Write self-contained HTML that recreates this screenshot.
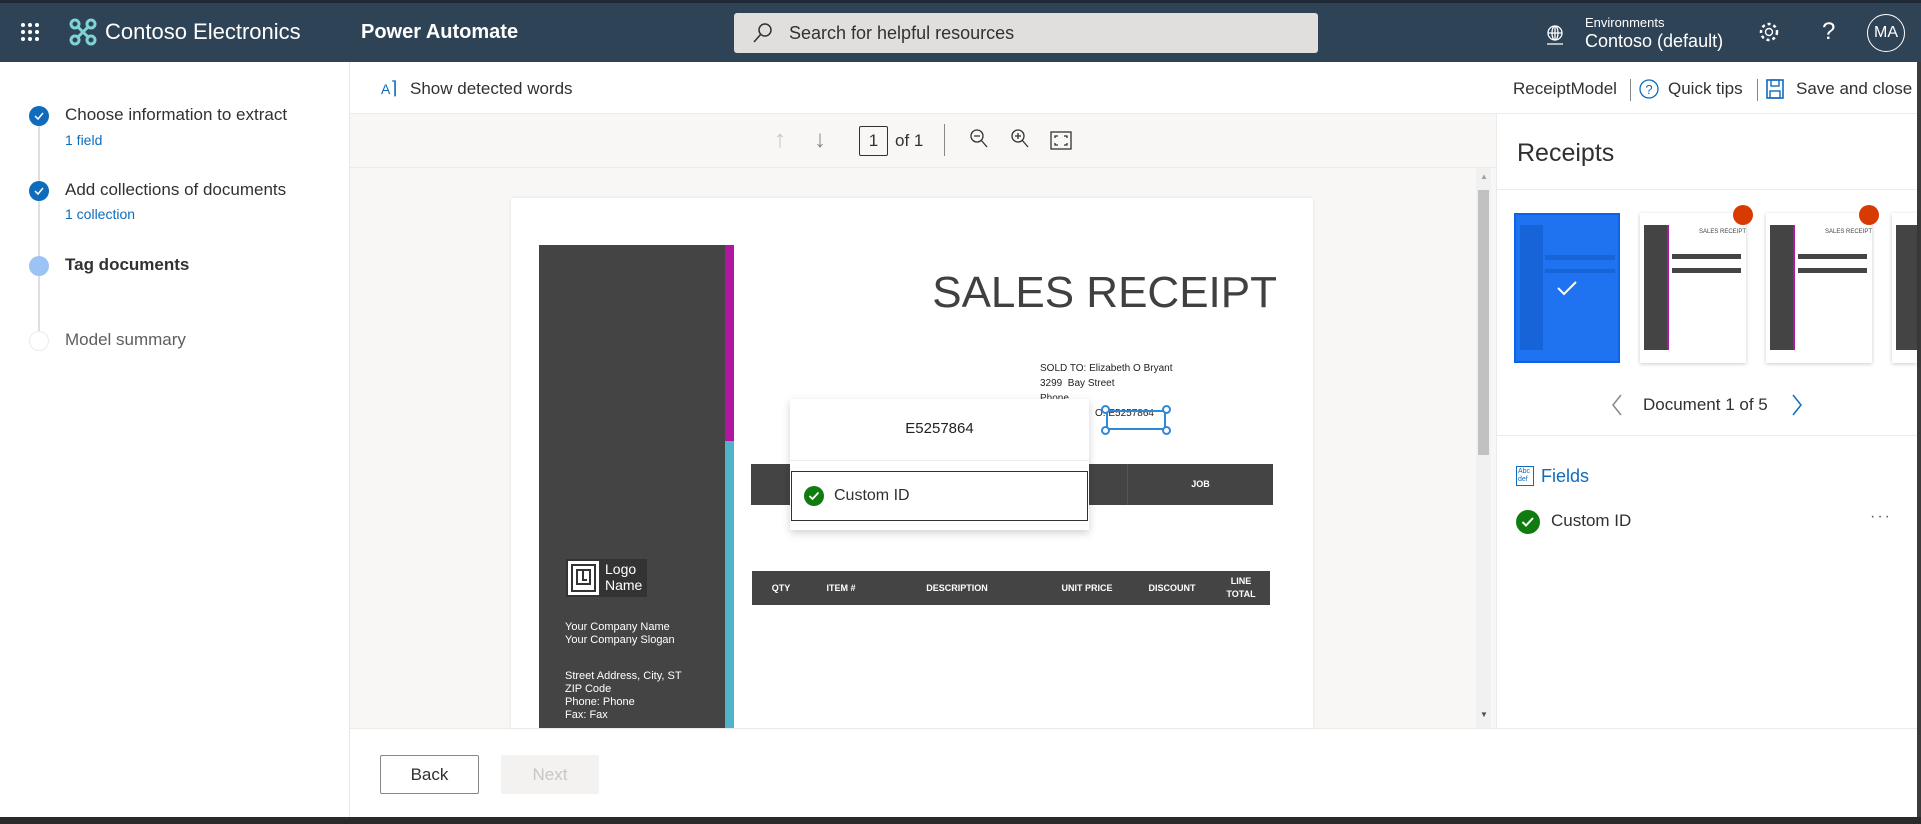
<!DOCTYPE html>
<html><head><meta charset="utf-8"><style>
*{box-sizing:border-box;margin:0;padding:0}
body{width:1921px;height:824px;position:relative;overflow:hidden;background:#fff;font-family:"Liberation Sans",sans-serif;color:#323130}
.a{position:absolute}
.hdr{left:0;top:0;width:1921px;height:62px;background:#2f4357;border-top:3px solid #1f2a36}
.w{color:#fff}
.dk{background:#444}
.th{font-size:9px;color:#fff;font-weight:bold;text-align:center}
</style></head><body>
<div class="a hdr"></div>
<svg class="a" style="left:20px;top:22px" width="20" height="20"><g fill="#fff"><circle cx="3" cy="3" r="2"/><circle cx="10" cy="3" r="2"/><circle cx="17" cy="3" r="2"/><circle cx="3" cy="10" r="2"/><circle cx="10" cy="10" r="2"/><circle cx="17" cy="10" r="2"/><circle cx="3" cy="17" r="2"/><circle cx="10" cy="17" r="2"/><circle cx="17" cy="17" r="2"/></g></svg>
<svg class="a" style="left:69px;top:18px" width="28" height="28" viewBox="0 0 28 28"><g fill="none" stroke="#7fd3d1" stroke-width="3"><circle cx="6" cy="6" r="4"/><circle cx="22" cy="6" r="4"/><circle cx="6" cy="22" r="4"/><circle cx="22" cy="22" r="4"/><path d="M9 9l10 10M19 9L9 19"/></g></svg>
<div class="a w" style="left:105px;top:19px;font-size:22px">Contoso Electronics</div>
<div class="a w" style="left:361px;top:21px;font-size:20px;font-weight:bold">Power Automate</div>
<div class="a" style="left:734px;top:13px;width:584px;height:40px;background:#e1dfdd;border-radius:3px"></div>
<svg class="a" style="left:752px;top:22px" width="22" height="22"><circle cx="13" cy="8" r="6" fill="none" stroke="#323130" stroke-width="1.5"/><path d="M9 12L2 20" stroke="#323130" stroke-width="1.5"/></svg>
<div class="a" style="left:789px;top:23px;font-size:18px;color:#323130">Search for helpful resources</div>
<svg class="a" style="left:1544px;top:24px" width="22" height="22"><g fill="none" stroke="#fff" stroke-width="1.3"><circle cx="11" cy="9" r="7"/><ellipse cx="11" cy="9" rx="3" ry="7"/><path d="M4 9h14M11 2v14M3 20h16"/></g></svg>
<div class="a w" style="left:1585px;top:15px;font-size:13px">Environments</div>
<div class="a w" style="left:1585px;top:31px;font-size:18px">Contoso (default)</div>
<svg class="a" style="left:1758px;top:21px" width="22" height="22"><circle cx="11" cy="11" r="3.5" fill="none" stroke="#fff" stroke-width="1.4"/><circle cx="11" cy="11" r="8" fill="none" stroke="#fff" stroke-width="2.5" stroke-dasharray="3 3"/></svg>
<div class="a w" style="left:1822px;top:18px;font-size:24px">?</div>
<div class="a w" style="left:1867px;top:14px;width:38px;height:38px;border:1.5px solid #fff;border-radius:50%;font-size:16px;text-align:center;line-height:35px">MA</div>

<!-- left panel -->
<div class="a" style="left:349px;top:62px;width:1px;height:755px;background:#e8e6e4"></div>
<div class="a" style="left:38px;top:126px;width:2px;height:215px;background:#e1dfdd"></div>
<svg class="a" style="left:29px;top:106px" width="20" height="20"><circle cx="10" cy="10" r="10" fill="#0f6cbd"/><path d="M6 10l3 3 5-6" fill="none" stroke="#fff" stroke-width="1.5"/></svg>
<svg class="a" style="left:29px;top:181px" width="20" height="20"><circle cx="10" cy="10" r="10" fill="#0f6cbd"/><path d="M6 10l3 3 5-6" fill="none" stroke="#fff" stroke-width="1.5"/></svg>
<div class="a" style="left:29px;top:256px;width:20px;height:20px;border-radius:50%;background:#9cc3f5"></div>
<div class="a" style="left:29px;top:331px;width:20px;height:20px;border-radius:50%;background:#fff;border:1.5px solid #edebe9"></div>
<div class="a" style="left:65px;top:105px;font-size:17px">Choose information to extract</div>
<div class="a" style="left:65px;top:132px;font-size:14px;color:#0f6cbd">1 field</div>
<div class="a" style="left:65px;top:180px;font-size:17px">Add collections of documents</div>
<div class="a" style="left:65px;top:206px;font-size:14px;color:#0f6cbd">1 collection</div>
<div class="a" style="left:65px;top:255px;font-size:17px;font-weight:bold">Tag documents</div>
<div class="a" style="left:65px;top:330px;font-size:17px;color:#605e5c">Model summary</div>

<!-- toolbar -->
<div class="a" style="left:381px;top:78px;font-size:14px;color:#0f6cbd">A<span style="font-size:18px">⌉</span></div>
<div class="a" style="left:410px;top:79px;font-size:17px">Show detected words</div>
<div class="a" style="left:1513px;top:79px;font-size:17px">ReceiptModel</div>
<div class="a" style="left:1630px;top:79px;width:1px;height:22px;background:#8a8886"></div>
<svg class="a" style="left:1638px;top:78px" width="22" height="22"><circle cx="11" cy="11" r="9" fill="none" stroke="#0f6cbd" stroke-width="1.3"/><text x="11" y="16" font-size="13" text-anchor="middle" fill="#0f6cbd" font-family="Liberation Sans">?</text></svg>
<div class="a" style="left:1668px;top:79px;font-size:17px">Quick tips</div>
<div class="a" style="left:1757px;top:79px;width:1px;height:22px;background:#8a8886"></div>
<svg class="a" style="left:1765px;top:78px" width="20" height="22"><rect x="2" y="2" width="16" height="18" fill="none" stroke="#0f6cbd" stroke-width="1.6"/><rect x="6" y="2" width="8" height="6" fill="none" stroke="#0f6cbd" stroke-width="1.4"/><rect x="5" y="13" width="10" height="7" fill="none" stroke="#0f6cbd" stroke-width="1.4"/></svg>
<div class="a" style="left:1796px;top:79px;font-size:17px">Save and close</div>
<div class="a" style="left:350px;top:113px;width:1571px;height:1px;background:#edebe9"></div>

<!-- viewer -->
<div class="a" style="left:350px;top:114px;width:1146px;height:614px;background:#f8f7f6"></div>
<div class="a" style="left:350px;top:167px;width:1146px;height:1px;background:#edebe9"></div>
<div class="a" style="left:774px;top:126px;font-size:24px;color:#c8c6c4">↑</div>
<div class="a" style="left:814px;top:126px;font-size:24px;color:#8a8886">↓</div>
<div class="a" style="left:859px;top:126px;width:29px;height:30px;border:1px solid #323130;border-radius:2px;font-size:17px;text-align:center;line-height:28px">1</div>
<div class="a" style="left:895px;top:131px;font-size:17px">of 1</div>
<div class="a" style="left:944px;top:124px;width:1px;height:32px;background:#8a8886"></div>
<svg class="a" style="left:968px;top:128px" width="80" height="26"><g fill="none" stroke="#323130" stroke-width="1.3"><circle cx="9" cy="8" r="6"/><path d="M13 12l6 7M6 8h6"/><circle cx="50" cy="8" r="6"/><path d="M54 12l6 7M47 8h6M50 5v6"/></g></svg>
<svg class="a" style="left:1050px;top:131px" width="22" height="20"><g fill="none" stroke="#323130" stroke-width="1.3"><rect x="1" y="1" width="20" height="17"/><path d="M5 7V5h3M14 5h3v2M17 12v2h-3M8 14H5v-2"/></g></svg>
<!-- scrollbar -->
<div class="a" style="left:1476px;top:168px;width:15px;height:560px;background:#f1f1f1"></div>
<div class="a" style="left:1478px;top:190px;width:11px;height:265px;background:#c1c1c1"></div>
<div class="a" style="left:1480px;top:172px;font-size:8px;color:#a0a0a0">▲</div>
<div class="a" style="left:1480px;top:710px;font-size:8px;color:#505050">▼</div>

<!-- page -->
<div class="a" style="left:511px;top:198px;width:802px;height:530px;background:#fff;box-shadow:0 0 3px rgba(0,0,0,.1);overflow:hidden">
 <div class="a dk" style="left:28px;top:47px;width:186px;height:500px"></div>
 <div class="a" style="left:214px;top:47px;width:9px;height:196px;background:#b0169e"></div>
 <div class="a" style="left:214px;top:243px;width:9px;height:300px;background:#4fb3c9"></div>
 <div class="a" style="left:55px;top:361px;width:81px;height:38px;background:#333"></div>
 <svg class="a" style="left:56px;top:362px" width="33" height="36"><rect x="1" y="1" width="31" height="34" fill="#fff"/><g fill="none" stroke="#333" stroke-width="2"><rect x="5" y="5" width="23" height="26"/><rect x="10" y="10" width="13" height="14"/><path d="M16 10v10h4"/></g></svg>
 <div class="a" style="left:94px;top:363px;font-size:14px;color:#fff;line-height:16px">Logo<br>Name</div>
 <div class="a" style="left:54px;top:423px;font-size:11px;color:#fff;line-height:13px">Your Company Name<br>Your Company Slogan</div>
 <div class="a" style="left:54px;top:472px;font-size:11px;color:#fff;line-height:13px">Street Address, City, ST<br>ZIP Code<br>Phone: Phone<br>Fax: Fax</div>
 <div class="a" style="right:36px;top:70px;font-size:44px;color:#404040;white-space:nowrap">SALES RECEIPT</div>
 <div class="a" style="left:529px;top:163px;font-size:10px;color:#222;line-height:15px;white-space:nowrap">SOLD TO: Elizabeth O Bryant<br>3299 &nbsp;Bay Street<br>Phone<br><span style="padding-left:55px">O: E5257864</span></div>
 <div class="a" style="left:595px;top:212px;width:60px;height:20px;border:2px solid #2f87d8"></div>
 <div class="a" style="left:590px;top:207px;width:9px;height:9px;border:2px solid #2f87d8;border-radius:50%;background:#fff"></div>
 <div class="a" style="left:651px;top:207px;width:9px;height:9px;border:2px solid #2f87d8;border-radius:50%;background:#fff"></div>
 <div class="a" style="left:590px;top:228px;width:9px;height:9px;border:2px solid #2f87d8;border-radius:50%;background:#fff"></div>
 <div class="a" style="left:651px;top:228px;width:9px;height:9px;border:2px solid #2f87d8;border-radius:50%;background:#fff"></div>
 <div class="a dk" style="left:240px;top:266px;width:522px;height:41px"></div>
 <div class="a" style="left:616px;top:266px;width:1px;height:41px;background:#555"></div>
 <div class="a th" style="left:617px;top:281px;width:145px">JOB</div>
 <div class="a dk" style="left:241px;top:373px;width:518px;height:34px"></div>
 <div class="a th" style="left:241px;top:385px;width:58px">QTY</div>
 <div class="a th" style="left:299px;top:385px;width:62px">ITEM #</div>
 <div class="a th" style="left:361px;top:385px;width:170px">DESCRIPTION</div>
 <div class="a th" style="left:531px;top:385px;width:90px">UNIT PRICE</div>
 <div class="a th" style="left:621px;top:385px;width:80px">DISCOUNT</div>
 <div class="a th" style="left:701px;top:377px;width:58px;line-height:13px">LINE<br>TOTAL</div>
</div>
<!-- popup -->
<div class="a" style="left:790px;top:399px;width:299px;height:131px;background:#fff;box-shadow:0 3px 8px rgba(0,0,0,.18)">
 <div class="a" style="left:0;top:21px;width:299px;text-align:center;font-size:15px;color:#222">E5257864</div>
 <div class="a" style="left:0;top:61px;width:299px;height:1px;background:#edebe9"></div>
 <div class="a" style="left:1px;top:72px;width:297px;height:50px;border:1px solid #323130"></div>
 <svg class="a" style="left:13px;top:86px" width="22" height="22"><circle cx="11" cy="11" r="10" fill="#107c10"/><path d="M6.5 11l3 3 6-6.5" fill="none" stroke="#fff" stroke-width="1.8"/></svg>
 <div class="a" style="left:44px;top:88px;font-size:16px">Custom ID</div>
</div>

<!-- footer -->
<div class="a" style="left:350px;top:728px;width:1571px;height:1px;background:#edebe9"></div>
<div class="a" style="left:380px;top:755px;width:99px;height:39px;border:1px solid #8a8886;border-radius:2px;font-size:17px;text-align:center;line-height:37px">Back</div>
<div class="a" style="left:501px;top:755px;width:98px;height:39px;background:#f3f2f1;border-radius:2px;font-size:17px;text-align:center;line-height:39px;color:#c8c6c4">Next</div>
<div class="a" style="left:0;top:817px;width:1921px;height:7px;background:#2a2a2a"></div>

<!-- right panel -->
<div class="a" style="left:1496px;top:114px;width:1px;height:614px;background:#edebe9"></div>
<div class="a" style="left:1917px;top:62px;width:4px;height:755px;background:#3b3b3b"></div>
<div class="a" style="left:1517px;top:139px;font-size:25px">Receipts</div>
<div class="a" style="left:1497px;top:189px;width:420px;height:1px;background:#edebe9"></div>
<div class="a" style="left:1514px;top:213px;width:106px;height:150px;background:#1f73f0;border:2px solid #0c63e4"></div>
<div class="a" style="left:1520px;top:225px;width:23px;height:125px;background:#1664d8"></div>
<div class="a" style="left:1545px;top:255px;width:70px;height:5px;background:#1664d8"></div>
<div class="a" style="left:1545px;top:269px;width:70px;height:4px;background:#1664d8"></div>
<svg class="a" style="left:1556px;top:280px" width="22" height="16"><path d="M2 8l6 6 12-12" fill="none" stroke="#fff" stroke-width="2"/></svg>
<div class="a" style="left:1640px;top:213px;width:106px;height:150px;background:#fff;box-shadow:0 1px 4px rgba(0,0,0,.2)"></div>
<div class="a" style="left:1644px;top:225px;width:25px;height:125px;background:#444;border-right:2px solid #b0169e"></div>
<div class="a" style="left:1672px;top:254px;width:69px;height:5px;background:#444"></div>
<div class="a" style="left:1672px;top:268px;width:69px;height:5px;background:#444"></div>
<div class="a" style="left:1699px;top:229px;font-size:6px;color:#444">SALES RECEIPT</div>
<div class="a" style="left:1766px;top:213px;width:106px;height:150px;background:#fff;box-shadow:0 1px 4px rgba(0,0,0,.2)"></div>
<div class="a" style="left:1770px;top:225px;width:25px;height:125px;background:#444;border-right:2px solid #b0169e"></div>
<div class="a" style="left:1798px;top:254px;width:69px;height:5px;background:#444"></div>
<div class="a" style="left:1798px;top:268px;width:69px;height:5px;background:#444"></div>
<div class="a" style="left:1825px;top:229px;font-size:6px;color:#444">SALES RECEIPT</div>
<div class="a" style="left:1892px;top:213px;width:25px;height:150px;background:#fff;box-shadow:0 1px 4px rgba(0,0,0,.2)"></div>
<div class="a" style="left:1896px;top:225px;width:21px;height:125px;background:#444"></div>
<div class="a" style="left:1733px;top:205px;width:20px;height:20px;border-radius:50%;background:#d83b01"></div>
<div class="a" style="left:1859px;top:205px;width:20px;height:20px;border-radius:50%;background:#d83b01"></div>
<svg class="a" style="left:1610px;top:393px" width="14" height="24"><path d="M11 2L3 12l8 10" fill="none" stroke="#8a8886" stroke-width="1.5"/></svg>
<div class="a" style="left:1643px;top:395px;font-size:17px">Document 1 of 5</div>
<svg class="a" style="left:1790px;top:393px" width="14" height="24"><path d="M3 2l8 10-8 10" fill="none" stroke="#0f6cbd" stroke-width="1.5"/></svg>
<div class="a" style="left:1497px;top:435px;width:420px;height:1px;background:#edebe9"></div>
<div class="a" style="left:1516px;top:466px;width:18px;height:20px;border:1px solid #0f6cbd;font-size:7px;line-height:8px;color:#0f6cbd;padding-left:1px;padding-top:1px">Abc<br>def</div>
<div class="a" style="left:1541px;top:466px;font-size:18px;color:#0f6cbd">Fields</div>
<svg class="a" style="left:1515px;top:509px" width="26" height="26"><circle cx="13" cy="13" r="12" fill="#107c10"/><path d="M7.5 13l3.5 3.5 7-7.5" fill="none" stroke="#fff" stroke-width="2"/></svg>
<div class="a" style="left:1551px;top:511px;font-size:17px">Custom ID</div>
<div class="a" style="left:1870px;top:508px;font-size:16px;color:#605e5c;letter-spacing:2px">···</div>
</body></html>
